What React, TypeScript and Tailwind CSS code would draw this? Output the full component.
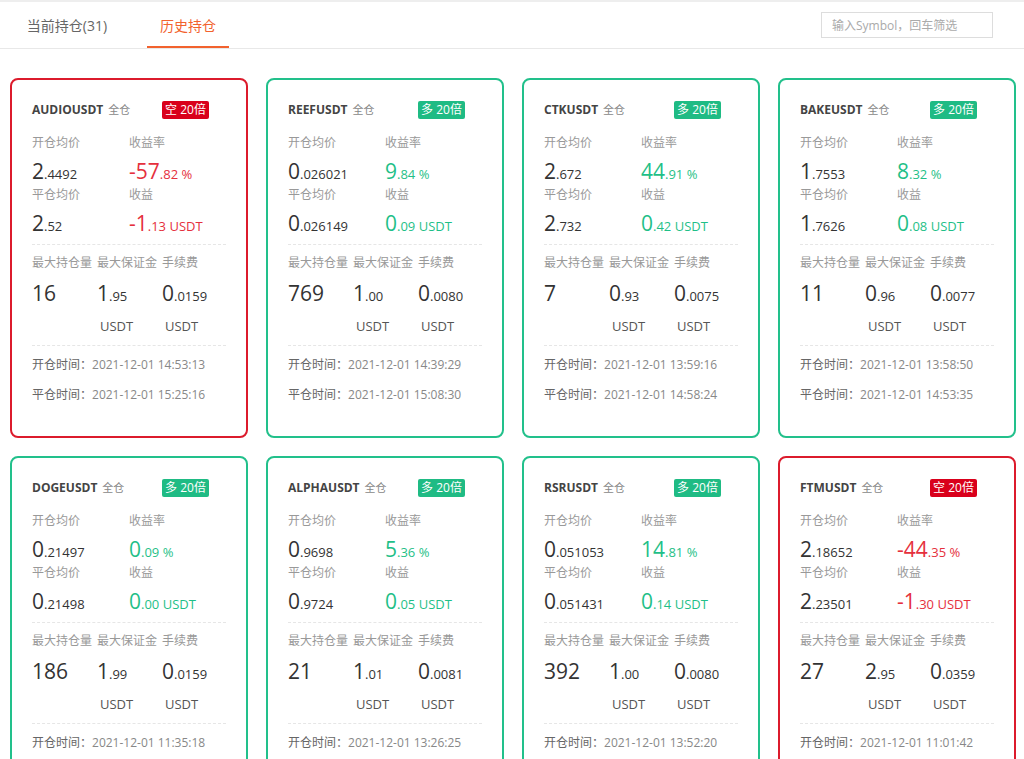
import React from "react"

type Pos = {
  symbol: string
  side: "long" | "short"
  open: string
  rate: string
  close: string
  pnl: string
  maxQty: string
  margin: string
  fee: string
  openTime: string
  closeTime: string
}

const positions: Pos[] = [
  { symbol: "AUDIOUSDT", side: "short", open: "2.4492", rate: "-57.82", close: "2.52", pnl: "-1.13", maxQty: "16", margin: "1.95", fee: "0.0159", openTime: "2021-12-01 14:53:13", closeTime: "2021-12-01 15:25:16" },
  { symbol: "REEFUSDT", side: "long", open: "0.026021", rate: "9.84", close: "0.026149", pnl: "0.09", maxQty: "769", margin: "1.00", fee: "0.0080", openTime: "2021-12-01 14:39:29", closeTime: "2021-12-01 15:08:30" },
  { symbol: "CTKUSDT", side: "long", open: "2.672", rate: "44.91", close: "2.732", pnl: "0.42", maxQty: "7", margin: "0.93", fee: "0.0075", openTime: "2021-12-01 13:59:16", closeTime: "2021-12-01 14:58:24" },
  { symbol: "BAKEUSDT", side: "long", open: "1.7553", rate: "8.32", close: "1.7626", pnl: "0.08", maxQty: "11", margin: "0.96", fee: "0.0077", openTime: "2021-12-01 13:58:50", closeTime: "2021-12-01 14:53:35" },
  { symbol: "DOGEUSDT", side: "long", open: "0.21497", rate: "0.09", close: "0.21498", pnl: "0.00", maxQty: "186", margin: "1.99", fee: "0.0159", openTime: "2021-12-01 11:35:18", closeTime: "2021-12-01 12:02:41" },
  { symbol: "ALPHAUSDT", side: "long", open: "0.9698", rate: "5.36", close: "0.9724", pnl: "0.05", maxQty: "21", margin: "1.01", fee: "0.0081", openTime: "2021-12-01 13:26:25", closeTime: "2021-12-01 13:50:12" },
  { symbol: "RSRUSDT", side: "long", open: "0.051053", rate: "14.81", close: "0.051431", pnl: "0.14", maxQty: "392", margin: "1.00", fee: "0.0080", openTime: "2021-12-01 13:52:20", closeTime: "2021-12-01 14:21:07" },
  { symbol: "FTMUSDT", side: "short", open: "2.18652", rate: "-44.35", close: "2.23501", pnl: "-1.30", maxQty: "27", margin: "2.95", fee: "0.0359", openTime: "2021-12-01 11:01:42", closeTime: "2021-12-01 11:38:09" },
]

// big integer part, small decimal part
function Num({ value, suffix, color, tall }: { value: string; suffix?: string; color?: string; tall?: boolean }) {
  const i = value.indexOf(".")
  const big = i === -1 ? value : value.slice(0, i)
  const small = i === -1 ? "" : value.slice(i)
  return (
    <div
      className={`text-[21px] whitespace-nowrap ${tall ? "h-[40px] leading-[44px]" : "h-[36px] leading-[40px]"} ${
        color ?? "text-[#333333]"
      }`}
    >
      {big}
      <span className="text-[13px] leading-none">
        {small}
        {suffix}
      </span>
    </div>
  )
}

function Label({ children }: { children: React.ReactNode }) {
  return <div className="h-[16px] leading-[16px] text-[12px] text-[#999999] whitespace-nowrap">{children}</div>
}

function Card({ p }: { p: Pos }) {
  const short = p.side === "short"
  const tone = short ? "text-[#e5303d]" : "text-[#1fbf88]"
  return (
    <div
      className={`rounded-[8px] border-2 bg-white pt-[20px] pb-[26px] px-[20px] ${
        short ? "border-[#dc1b2c]" : "border-[#22c08b]"
      }`}
    >
      <div className="flex h-[20px] items-center">
        <div className="flex w-[130px] items-baseline">
          <span className="text-[12px] font-bold text-[#444444]">{p.symbol}</span>
          <span className="ml-[5px] text-[11px] text-[#888888]">全仓</span>
        </div>
        <div
          className={`flex h-[18px] w-[47px] items-center justify-center rounded-[2px] text-[12px] text-white ${
            short ? "bg-[#d9001b]" : "bg-[#1fbb84]"
          }`}
        >
          {short ? "空" : "多"} 20倍
        </div>
      </div>

      <div className="mt-[15px] grid grid-cols-[97px_97px]">
        <div>
          <Label>开仓均价</Label>
          <Num value={p.open} />
          <Label>平仓均价</Label>
          <Num value={p.close} />
        </div>
        <div>
          <Label>收益率</Label>
          <Num value={p.rate} suffix=" %" color={tone} />
          <Label>收益</Label>
          <Num value={p.pnl} suffix=" USDT" color={tone} />
        </div>
      </div>

      <div className="mt-[5px] border-t border-dashed border-[#e6e6e6]" />

      <div className="mt-[10px] grid grid-cols-[65px_65px_64px]">
        <Label>最大持仓量</Label>
        <Label>最大保证金</Label>
        <Label>手续费</Label>
        <Num value={p.maxQty} tall />
        <Num value={p.margin} tall />
        <Num value={p.fee} tall />
        <div />
        <div className="h-[30px] pl-[3px] leading-[30px] text-[13px] text-[#555555]">USDT</div>
        <div className="h-[30px] pl-[3px] leading-[30px] text-[13px] text-[#555555]">USDT</div>
      </div>

      <div className="mt-[4px] border-t border-dashed border-[#e6e6e6]" />

      <div className="mt-[4px] text-[12px]">
        <div className="h-[30px] leading-[30px] whitespace-nowrap">
          <span className="text-[#666666]">开仓时间：</span>
          <span className="text-[#888888]">{p.openTime}</span>
        </div>
        <div className="h-[30px] leading-[30px] whitespace-nowrap">
          <span className="text-[#666666]">平仓时间：</span>
          <span className="text-[#888888]">{p.closeTime}</span>
        </div>
      </div>
    </div>
  )
}

export default function App() {
  return (
    <div
      className="min-h-screen bg-white"
      style={{ fontFamily: '"Open Sans", "Noto Sans CJK SC", sans-serif' }}
    >
      <div className="h-[2px] bg-[#eeeeee]" />
      <header className="flex h-[47px] items-center justify-between border-b border-[#e8e8e8] pl-[16px] pr-[31px]">
        <div className="flex h-full items-stretch text-[14px]">
          <div className="flex w-[102px] items-center justify-center text-[#666666]">当前持仓(31)</div>
          <div className="relative ml-[29px] flex w-[82px] items-center justify-center text-[#f2622e]">
            历史持仓
            <div className="absolute bottom-0 left-0 h-[2px] w-full bg-[#f2622e]" />
          </div>
        </div>
        <input
          className="h-[26px] w-[172px] border border-[#dddddd] px-[10px] text-[12px] text-[#333333] outline-none placeholder:text-[#aaaaaa]"
          placeholder="输入Symbol，回车筛选"
        />
      </header>

      <main className="grid grid-cols-4 gap-[18px] pl-[10px] pr-[8px] pt-[29px] pb-[20px]">
        {positions.map((p) => (
          <Card key={p.symbol} p={p} />
        ))}
      </main>
    </div>
  )
}
